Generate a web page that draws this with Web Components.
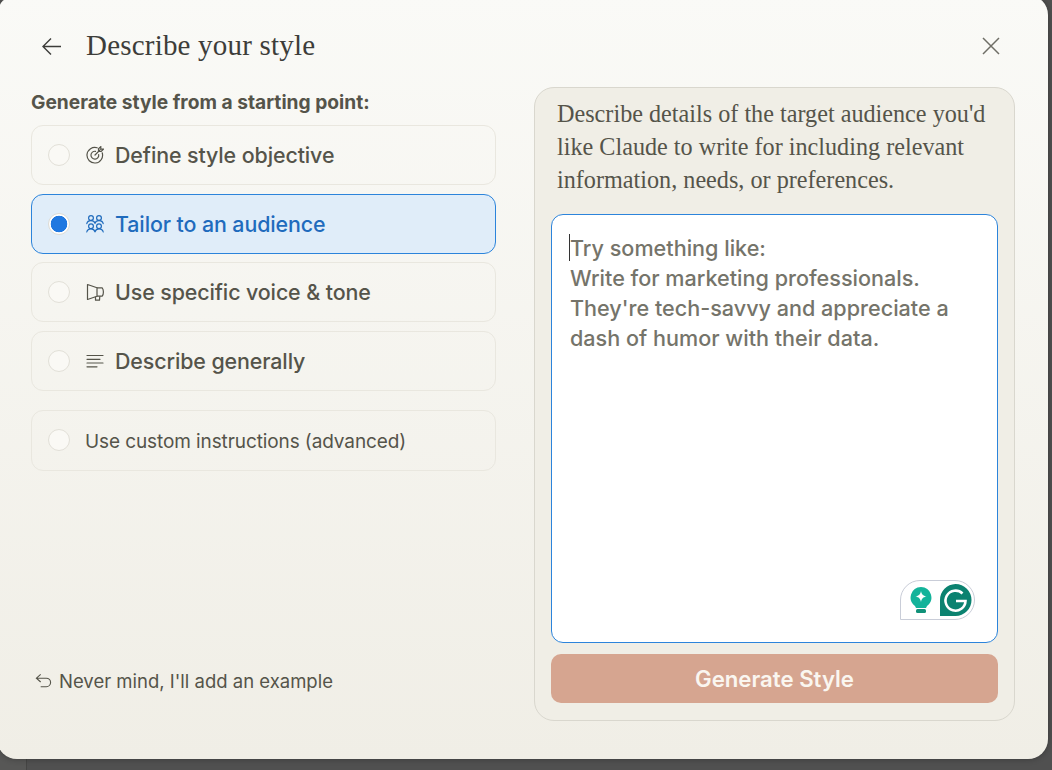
<!DOCTYPE html>
<html><head><meta charset="utf-8"><style>
html,body{margin:0;padding:0;height:770px;overflow:hidden;background:linear-gradient(90deg,#575756 26px,#454544 26px,#454544 27px,#505050 27px)}
</style></head><body>
<style-dialog>
  <span slot="title">Describe your style</span>
  <span slot="label">Generate style from a starting point:</span>
  <option-card slot="options"><svg slot="icon" viewBox="0 0 18 18" fill="none" stroke="currentColor" stroke-width="1.200" stroke-linecap="round"><path d="M16.200 6.800A7.800 7.800 0 1 1 11.200 1.800"/><path d="M12.700 8.500a3.900 3.900 0 1 1-3.200-3.200"/><path d="M9 9 14 4M12.500 5.500V2.800L14.800.6v2.600h2.600L15.200 5.500z"/></svg>Define style objective</option-card>
  <option-card slot="options" selected><svg slot="icon" viewBox="0 0 18 18" fill="none" stroke="currentColor" stroke-width="1.200" stroke-linecap="round" stroke-linejoin="round"><circle cx="5" cy="3" r="2.400"/><circle cx="13" cy="3" r="2.400"/><circle cx="5" cy="11.200" r="2.400"/><circle cx="13" cy="11.200" r="2.400"/><path d="M.8 8.600C1.200 6.600 2.800 5.600 5 5.600s3.500 1 4 2.800c.5-1.800 1.800-2.800 4-2.800s3.800 1 4.200 3M.8 17C1.200 14.900 2.800 13.800 5 13.800s3.500 1.100 4 3c.5-1.900 1.800-3 4-3s3.800 1.100 4.200 3.200"/></svg>Tailor to an audience</option-card>
  <option-card slot="options"><svg slot="icon" viewBox="0 0 18 18" fill="none" stroke="currentColor" stroke-width="1.200" stroke-linejoin="round"><path d="M1.500 1.500 11 4.800v8.400L1.500 16.500z"/><path d="M11 4.800h5.200c1.600 1.800 1.600 6.600 0 8.400H11"/><path d="M9.500 13.700v3.500h4l.3-4"/></svg>Use specific voice &amp; tone</option-card>
  <option-card slot="options"><svg slot="icon" viewBox="0 0 18 18" fill="none" stroke="currentColor" stroke-width="1.200" stroke-linecap="round"><path d="M1 3.500h16M1 7.300h13M1 11h16M1 14.800h10"/></svg>Describe generally</option-card>
  <option-card slot="custom" small>Use custom instructions (advanced)</option-card>
  <span slot="back">Never mind, I'll add an example</span>
  <audience-panel slot="panel">
    <span slot="intro">Describe details of the target audience you'd like Claude to write for including relevant information, needs, or preferences.</span>
    <span slot="line">Try something like:</span>
    <span slot="line">Write for marketing professionals.</span>
    <span slot="line">They're tech-savvy and appreciate a</span>
    <span slot="line">dash of humor with their data.</span>
    <span slot="button">Generate Style</span>
  </audience-panel>
</style-dialog>
<script>
function def(name,css,html){
  customElements.define(name,class extends HTMLElement{
    constructor(){super();const s=this.attachShadow({mode:'open'});s.innerHTML='<style>'+css+'</style>'+html;}
  });
}
def('option-card',`
:host{display:flex;align-items:center;box-sizing:border-box;height:60px;padding:0 16px;border:1px solid #e9e7df;border-radius:12px;color:#55544a;font:500 21.400px/28px Inter,"Liberation Sans",sans-serif;letter-spacing:-.1px;white-space:nowrap}
:host([selected]){background:#e0edf9;border-color:#2c84db;color:#1f6bbd}
.r{flex:none;box-sizing:border-box;width:22px;height:22px;border-radius:50%;border:1.500px solid #e2e0d8;background:#faf9f5;margin-right:16px}
:host([selected]) .r{background:radial-gradient(circle,#2078e0 8px,#fff 8.600px);border:1px solid #dedcd5}
::slotted(svg){flex:none;width:18px;height:18px;margin-right:11px}
:host([small]){font-size:19px;font-weight:400;height:61px;padding-top:0}
:host([small]) .r{margin-right:15px}
:host([small]) .t{padding-top:4px}
`,`<span class="r"></span><slot name="icon"></slot><span class="t"><slot></slot></span>`);
def('audience-panel',`
:host{display:flex;flex-direction:column;box-sizing:border-box;height:634px;padding:9px 16px 17px;background:#f0eee6;border:1px solid #d9d7ce;border-radius:20px}
.intro{padding:0 6px;margin:0 0 18px;font:400 24.200px/33px "Liberation Serif",serif;color:#55544a;height:99px}
.box{flex:1;position:relative;box-sizing:border-box;background:#fff;border:1px solid #2c84db;border-radius:12px;padding:18px;display:flex;flex-direction:column;font:500 21.600px/30px Inter,"Liberation Sans",sans-serif;color:#75746a;white-space:nowrap}
.box ::slotted(span){display:block}
.caret{position:absolute;left:17px;top:19px;width:1px;height:27px;background:#333}
.gr{position:absolute;right:22px;bottom:22px;width:75px;height:40px;box-sizing:border-box;background:#fff;border:1px solid #c9cdd8;border-radius:20px 20px 20px 0;display:flex;align-items:center;justify-content:space-between;padding:0 2px 0 8px}
.gr svg{display:block}
.btn{flex:none;height:49px;margin-top:11px;border-radius:10px;background:#d6a590;color:#faf6f0;font:600 22.200px/49px Inter,"Liberation Sans",sans-serif;text-align:center}
`,`<p class="intro"><slot name="intro"></slot></p>
<div class="box"><slot name="line"></slot><span class="caret"></span>
<div class="gr">
<svg width="24" height="28" viewBox="0 0 24 28"><path d="M12 1a10.500 10.500 0 0 0-6 19l1 2h10l1-2a10.500 10.500 0 0 0-6-19z" fill="#13b39a"/><path d="M12 5c.7 3.500 2 4.800 5.500 5.500-3.500.7-4.800 2-5.500 5.500-.7-3.500-2-4.800-5.500-5.500 3.500-.7 4.800-2 5.500-5.500z" fill="#fff"/><rect x="7" y="23" width="10" height="4" rx="1.500" fill="#109179"/></svg>
<svg width="33" height="32" viewBox="0 0 33 32"><path d="M16.500 0a16 16 0 0 1 0 32H1V16A16 16 0 0 1 16.500 0z" fill="#0b8270"/><path d="M23.500 9.500a10 10 0 1 0 3 7.500H17" fill="none" stroke="#fff" stroke-width="2.600"/></svg>
</div></div>
<div class="btn"><slot name="button"></slot></div>`);
def('style-dialog',`
:host{display:flex;flex-direction:column;box-sizing:border-box;width:1051px;height:764px;margin:-5px 0 0 -3px;border-radius:20px;background:linear-gradient(#fafaf7,#f0eee6);font-family:Inter,"Liberation Sans",sans-serif;color:#55544a;padding:5px 33px 38px 34px;box-shadow:0 0 6px rgba(0,0,0,.3)}
header{flex:none;height:87px;display:flex;align-items:center;font:400 29px/36px "Liberation Serif",serif;letter-spacing:.2px;color:#3d3d3a;padding-top:2px;box-sizing:border-box}
header .tt{margin-top:0}
.back{width:22px;height:22px;margin:2px 23px 0 10px;flex:none}
.close{margin-left:auto;width:22px;height:22px;margin-right:13px;margin-top:3px;flex:none;color:#6f6e66}
.main{flex:1;display:grid;grid-template-columns:465px 481px;column-gap:38px;min-height:0}
.left{display:flex;flex-direction:column;min-height:0}
.label{font:700 19.200px/24px Inter,"Liberation Sans",sans-serif;color:#55544a;margin:3px 0 11px}
.opts{display:flex;flex-direction:column;gap:8.500px}
.custom{margin-top:19px}
.foot{margin-top:auto;display:flex;align-items:center;gap:7px;padding:0 0 27px 4px;font:400 18.500px/26px Inter,"Liberation Sans",sans-serif;color:#55544a;white-space:nowrap}
.foot svg{width:17px;height:17px;flex:none}
`,`<header>
<svg class="back" viewBox="0 0 22 22" fill="none" stroke="currentColor" stroke-width="1.400"><path d="M20 11.500H2M10 3.500 2 11.500l8 8"/></svg>
<slot name="title"></slot>
<svg class="close" viewBox="0 0 22 22" fill="none" stroke="currentColor" stroke-width="1.500"><path d="M3 3l16 16M19 3 3 19"/></svg>
</header>
<div class="main"><div class="left"><div class="label"><slot name="label"></slot></div>
<div class="opts"><slot name="options"></slot></div>
<div class="custom"><slot name="custom"></slot></div>
<div class="foot"><svg viewBox="0 0 18 18" fill="none" stroke="currentColor" stroke-width="1.200"><path d="M6 1.500 1.500 5.500 6 9.500M1.500 5.500H12a4.200 4.200 0 0 1 0 9H6"/></svg><slot name="back"></slot></div>
</div><slot name="panel"></slot></div>`);
</script>
</body></html>
